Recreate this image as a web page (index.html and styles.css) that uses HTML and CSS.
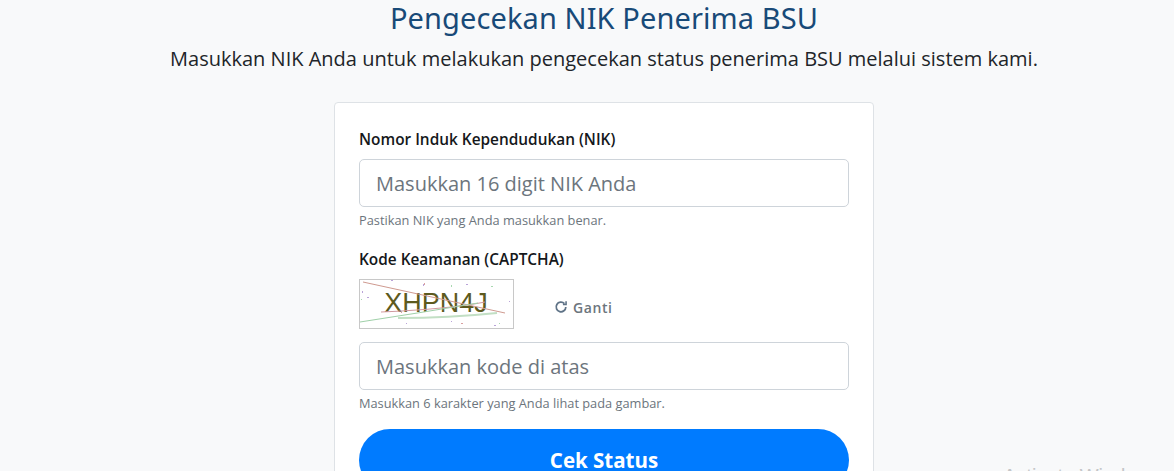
FILE: index.html
```html
<!DOCTYPE html>
<html lang="id">
<head>
  <meta charset="UTF-8">
  <meta name="viewport" content="width=device-width, initial-scale=1.0">
  <title>Pengecekan NIK Penerima BSU</title>
  <link rel="stylesheet" href="styles.css">
</head>
<body>
  <main class="halaman">
    <h1 class="judul">Pengecekan NIK Penerima BSU</h1>
    <p class="deskripsi">Masukkan NIK Anda untuk melakukan pengecekan status penerima BSU melalui sistem kami.</p>

    <form class="kartu">
      <div class="grup grup-nik">
        <label class="label" for="nik">Nomor Induk Kependudukan (NIK)</label>
        <input class="input" type="text" id="nik" placeholder="Masukkan 16 digit NIK Anda">
        <small class="bantuan">Pastikan NIK yang Anda masukkan benar.</small>
      </div>

      <div class="grup">
        <label class="label" for="captcha">Kode Keamanan (CAPTCHA)</label>
        <div class="captcha-baris">
          <svg class="captcha-gambar" width="155" height="50" viewBox="0 0 155 50">
            <rect x="0.5" y="0.5" width="154" height="49" fill="#fff" stroke="#c8c8c8"/>
            <text class="captcha-teks" x="77" y="33" text-anchor="middle">XHPN4J</text>
            <path d="M4 3 L146 34" stroke="#cf9a90" stroke-width="1" fill="none"/>
            <path d="M22 33 Q90 30 126 23" stroke="#d09aa0" stroke-width="1.2" fill="none"/>
            <path d="M1 43 Q60 34 119 24" stroke="#9fd0a8" stroke-width="1" fill="none"/>
            <path d="M39 39 Q90 39 138 34" stroke="#c2dfc4" stroke-width="2" fill="none"/>
            <g fill="#b9a3d8">
              <rect x="32" y="1" width="2" height="1"/>
              <rect x="64" y="5" width="1" height="2"/>
              <rect x="107" y="5" width="2" height="1"/>
              <rect x="8" y="18" width="2" height="1"/>
              <rect x="150" y="22" width="1" height="1"/>
              <rect x="3" y="12" width="1" height="2"/>
              <rect x="92" y="42" width="1" height="1"/>
              <rect x="135" y="46" width="2" height="1"/>
              <rect x="47" y="44" width="1" height="1"/>
            </g>
            <g fill="#d9a0a0">
              <rect x="65" y="4" width="1" height="2"/>
              <rect x="102" y="44" width="2" height="1"/>
              <rect x="42" y="33" width="1" height="1"/>
            </g>
            <g fill="#a8d8b0">
              <rect x="92" y="6" width="1" height="2"/>
              <rect x="132" y="7" width="2" height="1"/>
              <rect x="2" y="20" width="1" height="1"/>
              <rect x="140" y="44" width="1" height="1"/>
            </g>
          </svg>
          <button class="ganti" type="button">
            <svg width="14" height="14" viewBox="0 0 16 16" fill="none" stroke="#5f7387" stroke-width="2">
              <path d="M13.5 8a5.5 5.5 0 1 1-1.6-3.9"/>
              <path d="M13.8 1.5v3.6h-3.6" stroke-width="1.8"/>
            </svg>
            Ganti
          </button>
        </div>
        <input class="input" type="text" id="captcha" placeholder="Masukkan kode di atas">
        <small class="bantuan">Masukkan 6 karakter yang Anda lihat pada gambar.</small>
      </div>

      <button class="tombol" type="submit">Cek Status</button>
    </form>
  </main>

  <div class="aktivasi">Activate Windows</div>
</body>
</html>
```

FILE: styles.css
```css
html, body {
  height: 471px;
  overflow: hidden;
}
body {
  margin: 0;
  background-color: #f8f9fa;
  font-family: "Open Sans", Arial, sans-serif;
  color: #212529;
}
.halaman {
  display: flex;
  flex-direction: column;
  align-items: center;
  padding-left: 34px;
}
.judul {
  margin: 0;
  font-family: "Noto Sans", "Open Sans", sans-serif;
  font-size: 29px;
  letter-spacing: 0.1px;
  line-height: 36px;
  font-weight: 400;
  color: #184a78;
}
.deskripsi {
  margin: 8px 0 0;
  font-size: 20px;
  line-height: 30px;
}
.kartu {
  width: 540px;
  box-sizing: border-box;
  margin-top: 28px;
  padding: 24px;
  background-color: #fff;
  border: 1px solid #dee2e6;
  border-radius: 4px;
}
.grup-nik {
  margin-bottom: 17px;
}
.label {
  display: block;
  margin-bottom: 7px;
  padding-top: 1px;
  font-size: 15.4px;
  line-height: 24px;
  font-weight: 600;
  color: #15181b;
}
.input {
  display: block;
  width: 100%;
  height: 48px;
  box-sizing: border-box;
  padding: 8px 16px;
  font-family: inherit;
  font-size: 20px;
  color: #495057;
  background-color: #fff;
  border: 1px solid #ced4da;
  border-radius: 5px;
}
.input::placeholder {
  color: #6c757d;
  opacity: 1;
}
.bantuan {
  display: block;
  margin-top: 4px;
  font-size: 12.8px;
  line-height: 19px;
  color: #6c757d;
}
.captcha-baris {
  display: flex;
  align-items: center;
  margin-bottom: 13px;
}
.captcha-gambar {
  display: block;
}
.captcha-teks {
  font-family: "Liberation Sans", Arial, sans-serif;
  font-size: 27px;
  fill: #5d5a1e;
}
.ganti {
  display: flex;
  align-items: center;
  gap: 5px;
  margin-left: 40px;
  margin-top: 6px;
  padding: 0;
  background: none;
  border: none;
  font-family: inherit;
  font-size: 14px;
  font-weight: 600;
  letter-spacing: 0.6px;
  color: #6c757d;
}
.tombol {
  display: block;
  width: 100%;
  height: 62px;
  margin-top: 16px;
  background-color: #007bff;
  color: #fff;
  border: none;
  border-radius: 31px;
  font-family: inherit;
  font-size: 20.5px;
  font-weight: 700;
}
.aktivasi {
  position: absolute;
  left: 1003px;
  top: 465px;
  font-family: "Liberation Sans", Arial, sans-serif;
  font-size: 20px;
  color: #c4c6c8;
  white-space: nowrap;
}
```
